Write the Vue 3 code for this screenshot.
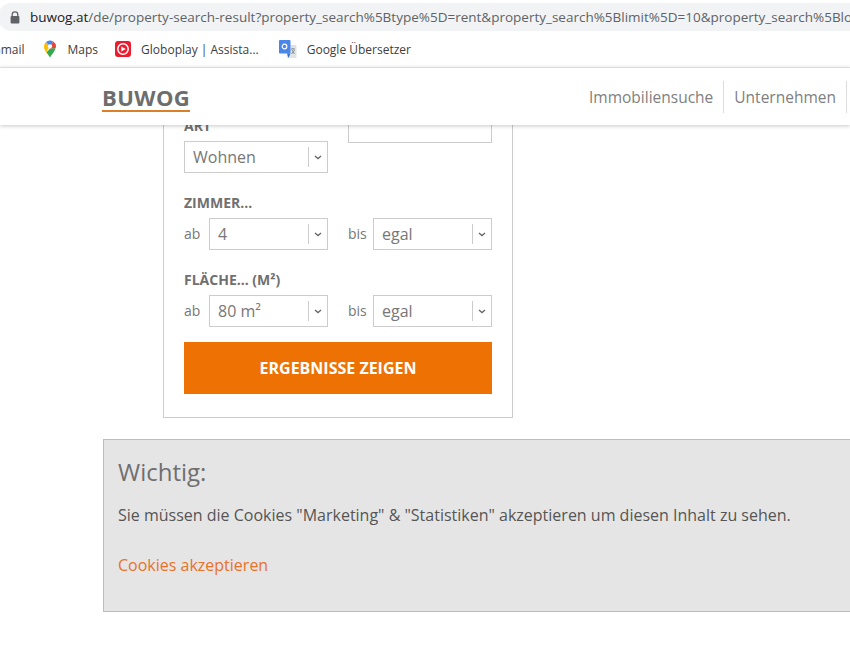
<script setup>
const bookmarks = [
  { name: 'Maps', icon: 'maps' },
  { name: 'Globoplay | Assista...', icon: 'globo' },
  { name: 'Google Übersetzer', icon: 'translate' }
]
const nav = ['Immobiliensuche', 'Unternehmen', 'News']
const groups = [
  { title: 'Zimmer...', from: '4', to: 'egal' },
  { title: 'Fläche... (m²)', from: '80 m²', to: 'egal' }
]
</script>

<template>
  <div class="page">
    <div class="chrome">
      <div class="omnibox">
        <svg class="lock" width="10" height="13" viewBox="0 0 10 13">
          <path d="M2.2 5.5V3.6a2.8 2.8 0 0 1 5.6 0v1.9" fill="none" stroke="#5f6368" stroke-width="1.3" />
          <rect x="0.6" y="5" width="8.8" height="7.4" rx="1" fill="#5f6368" />
        </svg>
        <div class="url"><span class="host">buwog.at</span>/de/property-search-result?property_search%5Btype%5D=rent&amp;property_search%5Blimit%5D=10&amp;property_search%5Blocation%5D=wien</div>
      </div>
      <div class="bookmarks">
        <span class="bm bm-gmail">Gmail</span>
        <span v-for="b in bookmarks" :key="b.name" class="bm" :class="'bm-' + b.icon">
          <svg v-if="b.icon === 'maps'" width="16" height="18" viewBox="0 0 16 18">
            <path d="M8 17.5C6.5 14.5 2 11 2 6.5A6 6 0 0 1 4 2l4 4.5-3 4z" fill="#fbbc04" />
            <path d="M8 17.5c-1-2-2.2-3.600-3.300-5.300L8 8.500l5.500-.5C13 11.500 9.500 14.500 8 17.500z" fill="#34a853" />
            <path d="M4 2a6 6 0 0 1 4-1.500c1.200 0 2.300.4 3.200 1L8 6.500z" fill="#4285f4" />
            <path d="M11.200 1.500A6 6 0 0 1 14 6.500c0 .5 0 1-.5 1.500L8 8.500V6.500z" fill="#ea4335" />
            <circle cx="8" cy="6.300" r="2.100" fill="#fff" />
          </svg>
          <svg v-else-if="b.icon === 'globo'" width="16" height="16" viewBox="0 0 16 16">
            <rect width="16" height="16" rx="3" fill="#ec1c2e" />
            <circle cx="8" cy="8" r="5.200" fill="none" stroke="#fff" stroke-width="1.500" />
            <path d="M6.300 5.600 10.800 8l-4.500 2.400z" fill="#fff" />
          </svg>
          <svg v-else width="18" height="18" viewBox="0 0 18 18">
            <path d="M7 5h9.500a1 1 0 0 1 1 1v11a1 1 0 0 1-1 1H8z" fill="#dfe3e6" />
            <rect x="0" y="0" width="11.500" height="13.500" rx="1" fill="#4a86e8" />
            <path d="M8 13.500 9.500 18l2-4.500z" fill="#3a6fc4" />
            <circle cx="5.500" cy="6.500" r="2.300" fill="none" stroke="#fff" stroke-width="1.200" />
            <path d="M12 9h4M14 8v1M12.500 14l3-4M13 10l2.500 4" stroke="#7d8790" stroke-width="0.900" fill="none" />
          </svg>
          <span>{{ b.name }}</span>
        </span>
      </div>
    </div>

    <header class="site-header">
      <div class="logo">BUWOG</div>
      <nav class="nav">
        <a v-for="n in nav" :key="n" class="nav-item">{{ n }}</a>
      </nav>
    </header>

    <main class="main">
      <form class="card" @submit.prevent>
        <div class="top-grid">
          <div>
            <div class="label">Art</div>
            <div class="select"><span class="value">Wohnen</span><span class="arrow"><svg width="8" height="5" viewBox="0 0 8 5"><path d="M1 1l3 2.600L7 1" fill="none" stroke="#666" stroke-width="1.300" /></svg></span></div>
          </div>
          <div class="text-input"></div>
        </div>

        <div v-for="g in groups" :key="g.title" class="group">
          <div class="label">{{ g.title }}</div>
          <div class="range">
            <div class="range-part">
              <span class="range-label">ab</span>
              <div class="select"><span class="value">{{ g.from }}</span><span class="arrow"><svg width="8" height="5" viewBox="0 0 8 5"><path d="M1 1l3 2.600L7 1" fill="none" stroke="#666" stroke-width="1.300" /></svg></span></div>
            </div>
            <div class="range-part">
              <span class="range-label">bis</span>
              <div class="select"><span class="value">{{ g.to }}</span><span class="arrow"><svg width="8" height="5" viewBox="0 0 8 5"><path d="M1 1l3 2.600L7 1" fill="none" stroke="#666" stroke-width="1.300" /></svg></span></div>
            </div>
          </div>
        </div>

        <button class="submit" type="submit">Ergebnisse zeigen</button>
      </form>

      <section class="notice">
        <h2>Wichtig:</h2>
        <p>Sie müssen die Cookies "Marketing" &amp; "Statistiken" akzeptieren um diesen Inhalt zu sehen.</p>
        <a class="accept">Cookies akzeptieren</a>
      </section>
    </main>
  </div>
</template>

<style>
html, body { margin: 0; background: #fff; overflow: hidden; }
</style>

<style scoped>
.page {
  width: 850px;
  height: 650px;
  overflow: hidden;
  font-family: "Open Sans", "Noto Sans", sans-serif;
  color: #777;
}
.chrome {
  height: 67px;
  padding-top: 3px;
  box-sizing: border-box;
  background: #fff;
  border-bottom: 0;
}
.omnibox {
  height: 28px;
  width: 900px;
  margin-left: -2px;
  padding-left: 12px;
  box-sizing: border-box;
  background: #f1f3f4;
  border-radius: 14px;
  display: flex;
  align-items: center;
  gap: 10px;
  overflow: hidden;
}
.lock { flex: none; }
.url {
  font-family: "Open Sans", sans-serif;
  font-size: 13.5px;
  color: #5f6368;
  white-space: nowrap;
}
.host { color: #202124; }
.bookmarks {
  height: 36px;
  display: flex;
  align-items: center;
  margin-left: -8px;
  font-size: 12px;
  color: #3c4043;
  white-space: nowrap;
}
.bm { display: flex; align-items: center; gap: 10px; }
.bm-maps { margin-left: 17px; }
.bm-globo { margin-left: 17px; }
.bm-translate { margin-left: 20px; }
.site-header {
  position: relative;
  z-index: 2;
  height: 58px;
  box-sizing: border-box;
  border-top: 1px solid #dadce0;
  background: #fff;
  box-shadow: 0 1px 4px rgba(0, 0, 0, 0.22);
  display: flex;
  align-items: center;
  justify-content: space-between;
  padding-left: 102px;
}
.logo {
  font-weight: 700;
  font-size: 22px;
  line-height: 26px;
  color: #6d6d6d;
  border-bottom: 2.500px solid #dc7f2a;
  letter-spacing: 0.400px;
  margin-top: 3px;
}
.nav { display: flex; width: 271px; overflow: hidden; flex: none; }
.nav-item {
  flex: none;
  font-size: 15.500px;
  line-height: 32px;
  color: #808080;
  padding: 0 10px;
  border-right: 1px solid #ddd;
}
.main { margin-top: -25px; }
.card {
  width: 350px;
  box-sizing: border-box;
  margin-left: 163px;
  padding: 10px 20px 23px;
  border: 1px solid #ccc;
  background: #fff;
}
.top-grid {
  display: grid;
  grid-template-columns: 144px 144px;
  column-gap: 20px;
  align-items: start;
  padding-top: 0;
}
.top-grid > div:first-child { padding-top: 5px; }
.text-input {
  height: 32px;
  box-sizing: border-box;
  border: 1px solid #ccc;
}
.label {
  height: 20px;
  line-height: 20px;
  margin-bottom: 5px;
  font-size: 14px;
  font-weight: 700;
  color: #707070;
  text-transform: uppercase;
  white-space: nowrap;
}
.group { margin-top: 20px; }
.range {
  display: grid;
  grid-template-columns: 144px 144px;
  column-gap: 20px;
}
.range-part { display: flex; align-items: center; }
.range-label {
  flex: none;
  width: 25px;
  font-size: 14px;
  color: #777;
  margin-top: -2px;
}
.select {
  flex: 1;
  height: 32px;
  box-sizing: border-box;
  border: 1px solid #ccc;
  display: flex;
  align-items: center;
  padding-left: 8px;
  background: #fff;
}
.value {
  flex: 1;
  font-size: 16px;
  color: #777;
}
.arrow {
  flex: none;
  width: 18px;
  height: 20px;
  border-left: 1px solid #ccc;
  display: flex;
  align-items: center;
  justify-content: center;
}
.submit {
  display: block;
  width: 100%;
  height: 52px;
  margin-top: 15px;
  border: 0;
  background: #ee7203;
  color: #fff;
  font-family: inherit;
  font-size: 16px;
  font-weight: 700;
  text-transform: uppercase;
}
.notice {
  width: 800px;
  height: 173px;
  box-sizing: border-box;
  margin: 21px 0 0 103px;
  padding: 0 14px;
  border: 1px solid #bdbdbd;
  background: #e5e5e5;
}
.notice h2 {
  margin: 16px 0 0;
  font-size: 24px;
  line-height: 32px;
  font-weight: 400;
  color: #6f6f6f;
}
.notice p {
  margin: 15px 0 0;
  font-size: 16px;
  line-height: 24px;
  color: #555;
}
.accept {
  display: block;
  margin-top: 26px;
  font-size: 16px;
  line-height: 24px;
  color: #e8722a;
}
</style>
